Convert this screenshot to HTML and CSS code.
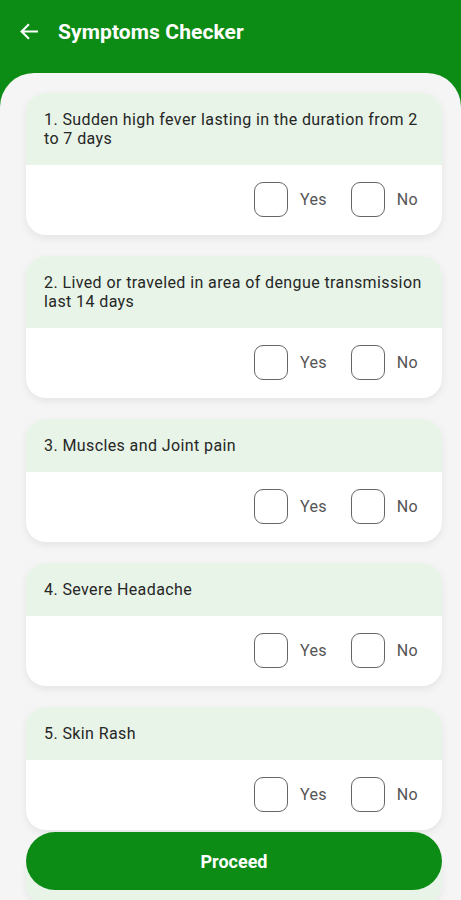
FILE: index.html
```html
<!DOCTYPE html>
<html lang="en">
<head>
    <meta charset="UTF-8">
    <meta name="viewport" content="width=device-width, initial-scale=1.0">
    <title>Symptoms Checker</title>
    <link rel="stylesheet" href="styles.css">
</head>
<body>
    <div class="app">
        <!-- Barra superior -->
        <header class="topbar">
            <svg class="back" width="27" height="27" viewBox="0 0 24 24">
                <path d="M19.5 12H5.5M11.5 5.5L5 12l6.5 6.5" fill="none" stroke="#fff" stroke-width="1.9"/>
            </svg>
            <h1>Symptoms Checker</h1>
        </header>

        <main class="sheet">
            <div class="card">
                <div class="question">1. Sudden high fever lasting in the duration from 2 to 7 days</div>
                <div class="answers">
                    <label class="option"><span class="box"></span>Yes</label>
                    <label class="option"><span class="box"></span>No</label>
                </div>
            </div>

            <div class="card">
                <div class="question">2. Lived or traveled in area of dengue transmission last 14 days</div>
                <div class="answers">
                    <label class="option"><span class="box"></span>Yes</label>
                    <label class="option"><span class="box"></span>No</label>
                </div>
            </div>

            <div class="card">
                <div class="question">3. Muscles and Joint pain</div>
                <div class="answers">
                    <label class="option"><span class="box"></span>Yes</label>
                    <label class="option"><span class="box"></span>No</label>
                </div>
            </div>

            <div class="card">
                <div class="question">4. Severe Headache</div>
                <div class="answers">
                    <label class="option"><span class="box"></span>Yes</label>
                    <label class="option"><span class="box"></span>No</label>
                </div>
            </div>

            <div class="card">
                <div class="question">5. Skin Rash</div>
                <div class="answers">
                    <label class="option"><span class="box"></span>Yes</label>
                    <label class="option"><span class="box"></span>No</label>
                </div>
            </div>

            <!-- próximo cartão, escondido atrás do botão -->
            <div class="card">
                <div class="question stub"></div>
            </div>

            <!-- Botão fixo -->
            <button class="proceed">Proceed</button>
        </main>
    </div>
</body>
</html>
```

FILE: styles.css
```css
body {
    margin: 0;
    font-family: Roboto, "Noto Sans", sans-serif;
}

.app {
    background-color: #0d8c15;
    height: 900px;
    display: flex;
    flex-direction: column;
    overflow: hidden;
}

/* Barra superior */
.topbar {
    height: 73px;
    display: flex;
    align-items: flex-start;
    padding: 18px 0 0 16px;
    box-sizing: border-box;
    gap: 15px;
    color: white;
}

.topbar h1 {
    margin: 2px 0 0 0;
    font-size: 21px;
    font-weight: 700;
    line-height: 24px;
    letter-spacing: 0.1px;
}

/* Área de conteúdo */
.sheet {
    flex: 1;
    position: relative;
    background-color: #f5f5f5;
    border-radius: 34px 34px 0 0;
    padding: 20px 19px 0 26px;
    display: flex;
    flex-direction: column;
    gap: 21px;
    overflow: hidden;
}

.card {
    flex-shrink: 0;
    background-color: white;
    border-radius: 20px;
    overflow: hidden;
    box-shadow: 0 3px 8px rgba(0, 0, 0, 0.07);
}

.question {
    background-color: #e7f4e7;
    padding: 17px 10px 17px 18px;
    font-size: 16px;
    line-height: 19px;
    letter-spacing: 0.4px;
    color: #262626;
}

.question.stub {
    height: 19px;
}

.answers {
    display: flex;
    justify-content: flex-end;
    gap: 24px;
    padding: 17px 24px 18px 18px;
}

.option {
    display: flex;
    align-items: center;
    gap: 12px;
    font-size: 16px;
    letter-spacing: 0.3px;
    color: #555;
}

.box {
    width: 32px;
    height: 33px;
    border: 1.5px solid #666;
    border-radius: 9px;
}

/* Botão Proceed */
.proceed {
    position: absolute;
    left: 26px;
    right: 19px;
    bottom: 10px;
    height: 58px;
    background-color: #0d8c15;
    color: white;
    border: none;
    border-radius: 29px;
    font-family: Roboto, sans-serif;
    font-size: 18px;
    font-weight: 700;
}
```
